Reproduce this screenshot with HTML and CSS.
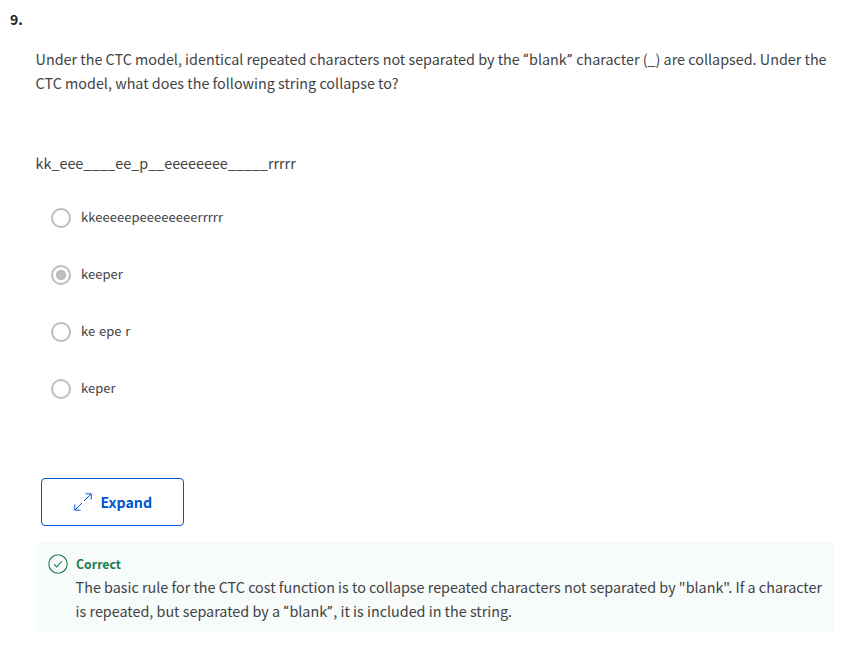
FILE: index.html
```
<!DOCTYPE html>
<html lang="en">
<head>
<meta charset="utf-8">
<title>Question 9</title>
<link rel="stylesheet" href="styles.css">
</head>
<body>
<main class="question">
  <h1 class="number">9.</h1>
  <div class="content">
    <p class="prompt">Under the CTC model, identical repeated characters not separated by the <span class="quote">“</span>blank<span class="quote">”</span> character (_) are collapsed. Under the<br>CTC model, what does the following string collapse to?</p>
    <p class="sequence">kk_eee____ee_p__eeeeeeee_____rrrrr</p>
    <ul class="options">
      <li class="option"><span class="radio"></span><span class="label">kkeeeeepeeeeeeeerrrrr</span></li>
      <li class="option"><span class="radio checked"></span><span class="label">keeper</span></li>
      <li class="option"><span class="radio"></span><span class="label">ke epe r</span></li>
      <li class="option"><span class="radio"></span><span class="label">keper</span></li>
    </ul>
    <button class="expand" type="button">
      <svg class="expand-icon" viewBox="0 0 18 18"><path d="M10 8 17 1M11.5 .8h5.7v5.7M8 10 1 17M.8 11.5v5.7h5.7"/></svg>
      <span class="expand-text">Expand</span>
    </button>
    <section class="feedback">
      <svg class="check-icon" viewBox="0 0 20 20"><circle cx="10" cy="10" r="9.2"/><path d="M6 10.4 8.7 13 13.8 7.4"/></svg>
      <div class="feedback-body">
        <h2 class="verdict">Correct</h2>
        <p class="explain">The basic rule for the CTC cost function is to collapse repeated characters not separated by "blank". If a character<br>is repeated, but separated by a <span class="quote">“</span>blank<span class="quote">”</span>, it is included in the string.</p>
      </div>
    </section>
  </div>
</main>
</body>
</html>
```
FILE: styles.css
```
* { box-sizing: border-box; }
body {
  margin: 0;
  background: #fff;
  color: #404244;
  font: 400 14.35px/24px "Noto Sans CJK SC", sans-serif;
  white-space: nowrap;
}
h1, h2, p, ul { margin: 0; padding: 0; }
.question { padding: 8px 6px 0 10px; }
.number { font-size: 14px; line-height: 23px; font-weight: 700; color: #1f1f1f; }
.content { padding: 16px 0 0 26px; }
.prompt, .sequence, .explain { margin-left: -0.4px; }
.quote { font-family: Roboto, sans-serif; font-size: 15.5px; line-height: 1; letter-spacing: 0.7px; }
.sequence { margin-top: 56px; }
.options { list-style: none; margin-top: 14px; padding-left: 15px; }
.option { display: flex; align-items: center; height: 57px; gap: 10px; }
.radio {
  width: 20px;
  height: 20px;
  border: 2px solid #bdbdbd;
  border-radius: 50%;
}
.checked { background: radial-gradient(circle, #bdbdbd 4.8px, transparent 5.4px); }
.label { font-size: 13px; letter-spacing: 0.05px; word-spacing: 0.8px; padding-bottom: 2px; }
.expand {
  display: flex;
  align-items: center;
  width: 143px;
  height: 48px;
  margin: 61px 0 0 5px;
  padding: 0 0 0 32px;
  gap: 8.5px;
  border: 1px solid #0056d2;
  border-radius: 4px;
  background: #fff;
  color: #0056d2;
  font: 700 14.2px/24px "Noto Sans CJK SC", sans-serif;
}
.expand-icon { width: 18px; height: 18px; fill: none; stroke: #0056d2; stroke-width: 1; }
.feedback {
  display: flex;
  gap: 8px;
  width: 799px;
  height: 91px;
  margin-top: 16px;
  padding: 12px;
  background: #f7fbf9;
}
.check-icon { width: 20px; height: 20px; flex: none; fill: none; stroke: #1d7c50; stroke-width: 1.1; }
.verdict { font-size: 12.3px; line-height: 21px; color: #1d7c50; }
```
